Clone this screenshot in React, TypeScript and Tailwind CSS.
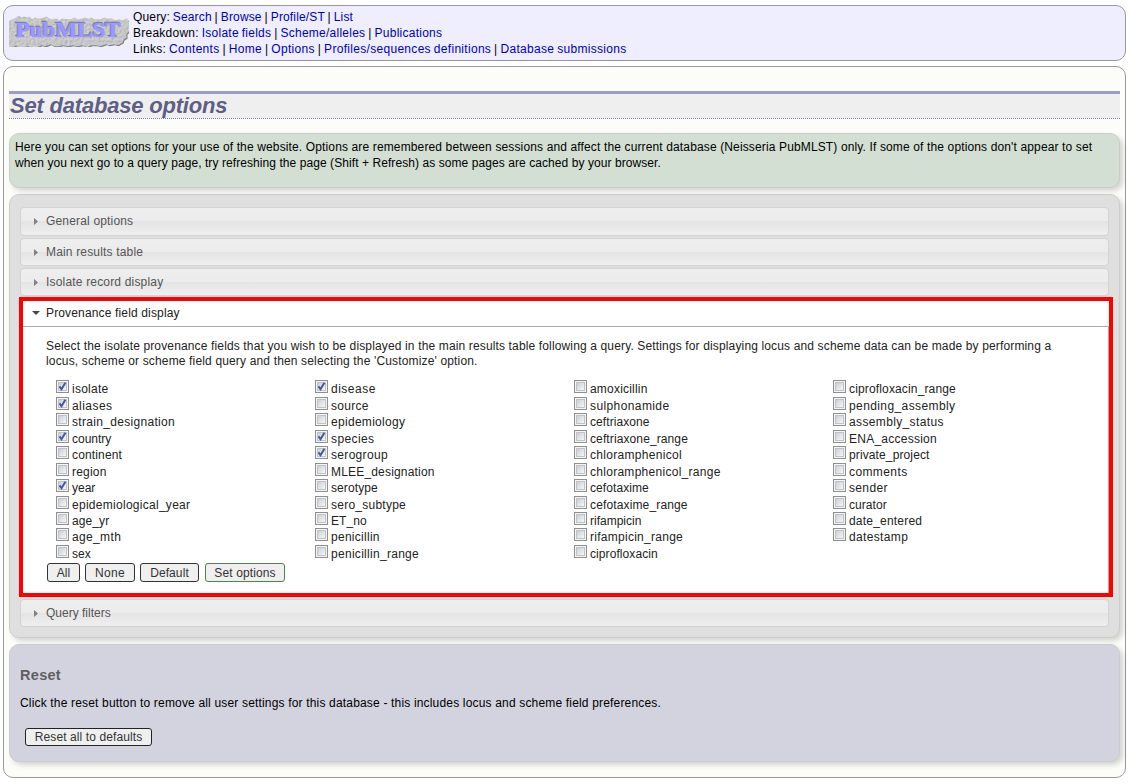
import React from "react";

/* name, checked, letter spacing in hundredths of a pixel */
type Field = [string, boolean, number];

const columns: { id: string; fields: Field[] }[] = [
  {
    id: "first",
    fields: [
      ["isolate", true, 25], ["aliases", true, 45], ["strain_designation", false, 31], ["country", true, 0],
      ["continent", false, 15], ["region", false, 20], ["year", true, 0], ["epidemiological_year", false, 28],
      ["age_yr", false, 10], ["age_mth", false, 35], ["sex", false, 0],
    ],
  },
  {
    id: "second",
    fields: [
      ["disease", true, 50], ["source", false, 30], ["epidemiology", false, 30], ["species", true, 40],
      ["serogroup", true, 32], ["MLEE_designation", false, 18], ["serotype", false, 10],
      ["sero_subtype", false, 25], ["ET_no", false, 10], ["penicillin", false, 28], ["penicillin_range", false, 29],
    ],
  },
  {
    id: "third",
    fields: [
      ["amoxicillin", false, 20], ["sulphonamide", false, 40], ["ceftriaxone", false, 8],
      ["ceftriaxone_range", false, 11], ["chloramphenicol", false, 30], ["chloramphenicol_range", false, 28],
      ["cefotaxime", false, 8], ["cefotaxime_range", false, 14], ["rifampicin", false, 0],
      ["rifampicin_range", false, 27], ["ciprofloxacin", false, 8],
    ],
  },
  {
    id: "fourth",
    fields: [
      ["ciprofloxacin_range", false, 15], ["pending_assembly", false, 40], ["assembly_status", false, 36],
      ["ENA_accession", false, 25], ["private_project", false, 12], ["comments", false, 40],
      ["sender", false, 35], ["curator", false, 5], ["date_entered", false, 20], ["datestamp", false, 35],
    ],
  },
];

function Logo() {
  const outline =
    "M6 2l2-2 3 2 3-1 3 1 2-1 3 3 3-2 4 1 5-1 3-1 4 3 6-1 3 2 3-2 5 1 4 0 3-2 4 2 5-1 2-1 4 1 3-1 3 2 6 0 4-2 3 1 5 0 4 2 3-1 4 1 4-2 2 2 3 1 0 4-2 3 0 3-3 3 0 4-3 2-1 3-5 3-4-1-5 1-3-1-6 2-4-1-5 0-5 2-4-2-6 1-4-1-5 1-6-1-3 1-5 0-4-2-5 2-4-1-3 1-3 2-5-1-3-1-4 1-5 0-3-2-5 3-4-1-3 1-4-1-1-4 2-3-3-3 1-4-2-3 2-3-1-3 3-1z";
  return (
    <svg width="120" height="32" viewBox="0 0 120 32" className="block shrink-0">
      <defs>
        <filter id="stone" x="0" y="0" width="100%" height="100%" colorInterpolationFilters="sRGB">
          <feTurbulence type="fractalNoise" baseFrequency="0.4" numOctaves="3" seed="9" result="n" />
          <feDiffuseLighting in="n" surfaceScale="0.5" lightingColor="#dadada" result="l">
            <feDistantLight azimuth="225" elevation="66" />
          </feDiffuseLighting>
          <feComposite in="l" in2="SourceAlpha" operator="in" />
        </filter>
      </defs>
      <g transform="translate(1.5 0.5) scale(0.975 0.96)">
        <path transform="translate(1 1.1)" fill="#828282" d={outline} />
        <path filter="url(#stone)" fill="#c4c4c4" d={outline} />
      </g>
      <g fontFamily="Liberation Serif, serif" fontWeight="700" fontSize="22" strokeWidth="0.6">
        <text x="5.7" y="21.4" textLength="105" lengthAdjust="spacingAndGlyphs" fill="#77779c" stroke="#77779c">
          PubMLST
        </text>
        <text x="6.7" y="22.3" textLength="105" lengthAdjust="spacingAndGlyphs" fill="#9999ff" stroke="#9999ff">
          PubMLST
        </text>
      </g>
    </svg>
  );
}

function LinkRow({ label, links, className }: { label: string; links: string[]; className: string }) {
  return (
    <div className={"h-4 whitespace-nowrap " + className}>
      {label}:{" "}
      {links.map((l, i) => (
        <React.Fragment key={l}>
          {i > 0 && " | "}
          <a className="text-[#0000bb]">{l}</a>
        </React.Fragment>
      ))}
    </div>
  );
}

function Section({ title, className }: { title: string; className: string }) {
  return (
    <div
      className={
        "flex items-center rounded-[4px] border border-[#d3d3d3] bg-[linear-gradient(#eeeeee_0%,#ececec_49%,#e4e4e4_50%,#efefef_100%)] pl-[13px] text-[#555555] " +
        className
      }
    >
      <svg width="4" height="7" viewBox="0 0 4 7" className="mr-2 mt-px shrink-0">
        <path d="M0 0l4 3.5L0 7z" fill="#808080" />
      </svg>
      {title}
    </div>
  );
}

function Check({ on }: { on: boolean }) {
  return (
    <span className="flex h-[13px] w-[13px] shrink-0 border border-[#8e8f8f] bg-[#f4f4f4] p-px">
      <span className="relative block h-[9px] w-[9px] border border-[#bfc3c9] bg-[linear-gradient(135deg,#cbcfd5,#f6f6f6)]">
        {on && (
          <svg width="9" height="9" viewBox="0 0 9 9" className="absolute -left-px -top-px">
            <path d="M1.5 4.4L3.5 7.2L7.4 0.8" fill="none" stroke="#455c9c" strokeWidth="2" />
          </svg>
        )}
      </span>
    </span>
  );
}

const buttonBase =
  "flex items-center justify-center rounded-[3px] border bg-[#efefef] text-[#333333] whitespace-nowrap ";

const panel = "rounded-[10px] border border-[#cccccc] shadow-[3px_3px_5px_rgba(0,0,0,0.16)] ";

export default function App() {
  return (
    <div className="h-[784px] w-[1129px] overflow-hidden bg-white pl-[3px] pt-[5px] font-['Liberation_Sans',Arial,sans-serif] text-[12px] leading-4 text-black">
      <header className="flex h-14 w-[1123px] rounded-[10px] border border-[#999999] bg-[#eeeeff] pl-[5px] pt-[3px]">
        <div className="mt-[6px] w-[124px]">
          <Logo />
        </div>
        <nav>
          <LinkRow
            label="Query"
            links={["Search", "Browse", "Profile/ST", "List"]}
            className="tracking-[0.15px] [word-spacing:-0.6px]"
          />
          <LinkRow
            label="Breakdown"
            links={["Isolate fields", "Scheme/alleles", "Publications"]}
            className="tracking-[0.24px] [word-spacing:-0.6px]"
          />
          <LinkRow
            label="Links"
            links={["Contents", "Home", "Options", "Profiles/sequences definitions", "Database submissions"]}
            className="tracking-[0.3px] [word-spacing:-0.7px]"
          />
        </nav>
      </header>

      <main className="mt-[5px] h-[712px] w-[1123px] rounded-[10px] border border-[#999999] bg-[#fcfdf8] px-[5px] pt-6">
        <div className="border-b border-dotted border-[#7777bb]">
          <h1 className="h-[27px] border-t-[3px] border-[#9c9ccc] bg-[#efefef] pl-px text-[22px] font-bold italic leading-[23px] tracking-[-0.2px] text-[#5e5e86]">
            Set database options
          </h1>
        </div>

        <section className={panel + "mt-[14px] h-[55px] bg-[#d3dfd3] pl-[5px] pt-[5px]"}>
          <p className="whitespace-nowrap tracking-[0.135px]">
            Here you can set options for your use of the website. Options are remembered between sessions and affect
            the current database (Neisseria PubMLST) only. If some of the options don't appear to set
          </p>
          <p className="whitespace-nowrap tracking-[0.073px]">
            when you next go to a query page, try refreshing the page (Shift + Refresh) as some pages are cached by
            your browser.
          </p>
        </section>

        <section className={panel + "mt-[6px] h-[444px] bg-[#dfdfdf] px-[10px] pt-3"}>
          <div className="flex flex-col gap-0.5">
            <Section title="General options" className="h-[29px] pb-0.5 tracking-[0.17px]" />
            <Section title="Main results table" className="h-7 tracking-[0.17px]" />
            <Section title="Isolate record display" className="h-7 tracking-[0.18px]" />
          </div>
          <div className="-ml-px mt-px h-[300px] w-[1094px] border-4 border-[#ff0000] bg-white">
            <div className="flex h-[26px] w-[1086px] items-center border-b border-[#aaaaaa] pb-0.5 pl-[9px] tracking-[0.15px] text-[#212121]">
              <svg width="8" height="4" viewBox="0 0 8 4" className="mr-1.5">
                <path d="M0 0h8L4 4z" fill="#454545" />
              </svg>
              Provenance field display
            </div>
            <div className="h-[266px] w-[1086px] border-r border-[#aaaaaa] pl-[23px] pt-3 leading-[15px] text-[#222222]">
              <p className="whitespace-nowrap tracking-[0.142px]">
                Select the isolate provenance fields that you wish to be displayed in the main results table following
                a query. Settings for displaying locus and scheme data can be made by performing a
              </p>
              <p className="whitespace-nowrap tracking-[0.155px]">
                locus, scheme or scheme field query and then selecting the 'Customize' option.
              </p>
              <div className="mt-[11px] flex pl-[10px]">
                {columns.map((c) => (
                  <div key={c.id} className="w-[259px] shrink-0">
                    {c.fields.map(([name, on, spacing], i) => (
                      <label
                        key={name}
                        className={
                          ((i % 2 === 0 && i < 8) || i === 9 ? "h-[17px]" : "h-4") + " flex items-start"
                        }
                      >
                        <Check on={on} />
                        <span className="ml-[3px] mt-0.5" style={{ letterSpacing: spacing / 100 }}>
                          {name}
                        </span>
                      </label>
                    ))}
                  </div>
                ))}
              </div>
              <div className="ml-px mt-0.5 flex h-[19px]">
                <button className={buttonBase + "w-[33px] border-[#333333] pt-0.5"}>All</button>
                <button className={buttonBase + "ml-[5px] w-[50px] border-[#333333] pt-0.5 tracking-[0.3px]"}>
                  None
                </button>
                <button className={buttonBase + "ml-[5px] w-[59px] border-[#333333] pt-0.5 tracking-[0.1px]"}>
                  Default
                </button>
                <button className={buttonBase + "ml-[6px] w-[80px] border-[#4f804f] pt-0.5 tracking-[0.12px]"}>
                  Set options
                </button>
              </div>
            </div>
          </div>
          <div className="mt-0.5">
            <Section title="Query filters" className="h-7" />
          </div>
        </section>

        <section className={panel + "mt-[6px] h-[118px] bg-[#d3d3df] pl-[10px] pt-[22px]"}>
          <h2 className="text-[14.5px] font-bold leading-4 tracking-[0.3px] text-[#5f5f5f]">Reset</h2>
          <p className="mt-3 whitespace-nowrap tracking-[0.172px]">
            Click the reset button to remove all user settings for this database - this includes locus and scheme
            field preferences.
          </p>
          <button className={buttonBase + "ml-[5px] mt-[17px] h-[18px] w-[127px] border-[#222222] tracking-[0.1px]"}>
            Reset all to defaults
          </button>
        </section>
      </main>
    </div>
  );
}
